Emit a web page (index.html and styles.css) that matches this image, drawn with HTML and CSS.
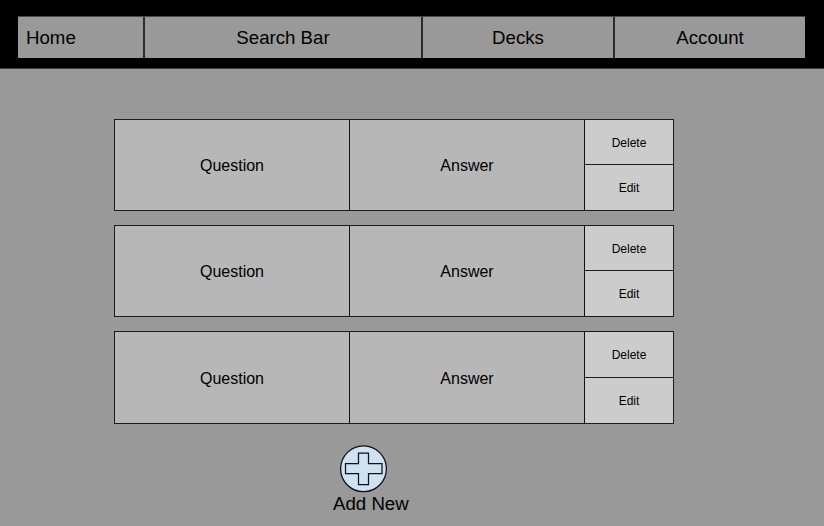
FILE: index.html
```html
<!DOCTYPE html>
<html lang="en">
<head>
<meta charset="utf-8">
<title>Flashcards</title>
<link rel="stylesheet" href="styles.css">
</head>
<body>
<header class="topbar">
  <nav class="nav">
    <a class="nav-item nav-home">Home</a>
    <a class="nav-item">Search Bar</a>
    <a class="nav-item">Decks</a>
    <a class="nav-item">Account</a>
  </nav>
</header>
<main class="page">
  <section class="cards">
    <article class="card">
      <div class="cell">Question</div>
      <div class="cell">Answer</div>
      <div class="actions"><div class="action">Delete</div><div class="action">Edit</div></div>
    </article>
    <article class="card">
      <div class="cell">Question</div>
      <div class="cell">Answer</div>
      <div class="actions"><div class="action">Delete</div><div class="action">Edit</div></div>
    </article>
    <article class="card card-last">
      <div class="cell">Question</div>
      <div class="cell">Answer</div>
      <div class="actions"><div class="action">Delete</div><div class="action">Edit</div></div>
    </article>
  </section>
  <div class="add">
    <svg class="add-icon" width="48" height="48" viewBox="0 0 48 48">
      <circle cx="23.5" cy="23.8" r="22.9" />
      <path d="M18.5 8H28.5V18.7H42V28.5H28.5V39.5H18.5V28.5H5.5V18.7H18.5Z" />
    </svg>
    <span class="add-label">Add New</span>
  </div>
</main>
</body>
</html>
```
FILE: styles.css
```css
* {
  box-sizing: border-box;
}

body {
  margin: 0;
  height: 526px;
  overflow: hidden;
  background: #999;
  color: #000;
  font-family: "Liberation Sans", Arial, sans-serif;
}

.topbar {
  height: 69px;
  padding: 16px 19px 0 18px;
  background: #000;
  border-bottom: 1px solid #404040;
}

.nav {
  display: grid;
  grid-template-columns: 125px 278px 192px 192px;
  height: 42px;
  background: #999;
  border-top: 1px solid #4a4a4a;
}

.nav-item {
  display: flex;
  align-items: center;
  justify-content: center;
  font-size: 18.67px;
  border-left: 2px solid #2b2b2b;
}

.nav-home {
  justify-content: flex-start;
  padding-left: 8px;
  border-left: 0;
}

.page {
  padding: 50px 0 0 114px;
}

.cards {
  display: flex;
  flex-direction: column;
  gap: 14px;
  width: 560px;
}

.card {
  display: grid;
  grid-template-columns: 234px 235px 89px;
  height: 92px;
  border: 1px solid #1c1c1c;
  background: #b7b7b7;
}

.card-last {
  height: 93px;
}

.cell {
  display: flex;
  align-items: center;
  justify-content: center;
  padding-top: 2px;
  font-size: 16px;
}

.cell + .cell,
.actions {
  border-left: 1px solid #111;
}

.actions {
  display: grid;
  grid-template-rows: 44px 1fr;
  background: #ccc;
}

.card-last .actions {
  grid-template-rows: 45px 1fr;
}

.action {
  display: flex;
  align-items: center;
  justify-content: center;
  padding-top: 1px;
  font-size: 12px;
}

.action + .action {
  border-top: 1px solid #1c1c1c;
}

.add {
  display: flex;
  flex-direction: column;
  align-items: flex-start;
  margin: 21px 0 0 219px;
}

.add-icon {
  display: block;
  margin-left: 7px;
  fill: #cfe2f3;
  stroke: #111;
  stroke-width: 1.25;
}

.add-label {
  font-size: 18.67px;
  line-height: 22px;
}
```
